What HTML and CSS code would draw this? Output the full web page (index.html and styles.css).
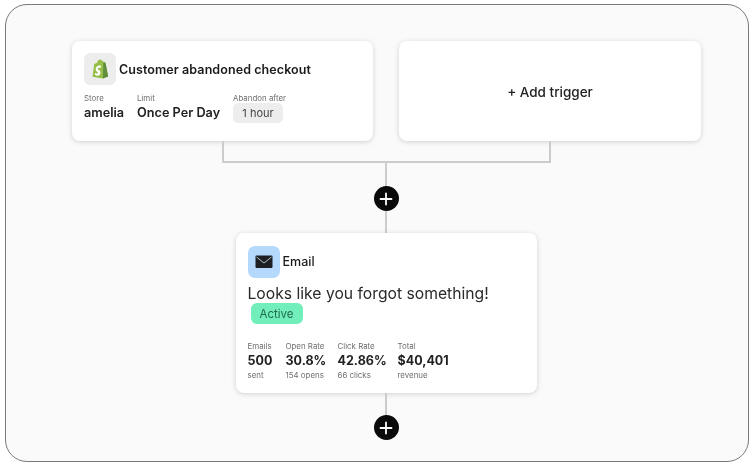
FILE: index.html
```html
<!DOCTYPE html>
<html lang="en">
<head>
<meta charset="utf-8">
<title>Flow</title>
<link rel="stylesheet" href="styles.css">
</head>
<body>
<main class="frame">
  <div class="triggers">
    <section class="card trigger">
      <div class="head">
        <span class="tile tile-grey">
          <svg width="17" height="20" viewBox="0 0 20 23"><path d="M2.6 5.4 5.8 4.4C6.4 2 7.8.4 9.6.4c.9 0 1.400.5 1.700 1 .8 0 1.300.6 1.700 1.700l1.300-.3 1 1.100L16 4.800 19 20.300 12.700 22.700.6 20.500Z" fill="#95bf47"/><path d="M14.600 3.900 16 4.800 19 20.300 12.700 22.700 13.400 3.900Z" fill="#5e8e3e"/><path d="M10.800 8.100 10.100 10.300C9.500 10 8.800 9.900 8.200 9.900c-1.500 0-1.500.9-1.500 1.200 0 1.200 3.300 1.700 3.300 4.600 0 2.300-1.400 3.700-3.400 3.700-2.300 0-3.400-1.400-3.400-1.400l.6-2s1.200 1 2.200 1c.7 0 1-.5 1-.9 0-1.600-2.700-1.700-2.700-4.400 0-2.200 1.600-4.400 4.800-4.400 1.300 0 1.700.4 1.700.4Z" fill="#fff"/></svg>
        </span>
        <h2 class="trigger-title">Customer abandoned checkout</h2>
      </div>
      <div class="fields">
        <div class="field field-store">
          <span class="label">Store</span>
          <strong class="value">amelia</strong>
        </div>
        <div class="field field-limit">
          <span class="label">Limit</span>
          <strong class="value">Once Per Day</strong>
        </div>
        <div class="field">
          <span class="label">Abandon after</span>
          <span class="chip">1 hour</span>
        </div>
      </div>
    </section>
    <section class="card add">+ Add trigger</section>
  </div>
  <div class="bracket"></div>
  <div class="line line-a"></div>
  <div class="plus"><svg width="14" height="14" viewBox="0 0 14 14"><path d="M7 1.500v11M1.500 7h11" stroke="#fff" stroke-width="1.800" stroke-linecap="round"/></svg></div>
  <div class="line line-b"></div>
  <section class="card email">
    <div class="head">
      <span class="tile tile-blue">
        <svg width="18" height="14" viewBox="0 0 18 14"><rect x="0.500" y="0.500" width="17" height="12.500" rx="1" fill="#1d1f24"/><path d="M1.500 2 9 8l7.500-6" fill="none" stroke="#aebccb" stroke-width="1"/></svg>
      </span>
      <h2 class="email-title">Email</h2>
    </div>
    <p class="subject">Looks like you forgot something!</p>
    <span class="status">Active</span>
    <div class="stats">
      <div class="stat stat-emails"><span class="label">Emails</span><strong class="num">500</strong><span class="note">sent</span></div>
      <div class="stat stat-open"><span class="label">Open Rate</span><strong class="num">30.8%</strong><span class="note">154 opens</span></div>
      <div class="stat stat-click"><span class="label">Click Rate</span><strong class="num">42.86%</strong><span class="note">66 clicks</span></div>
      <div class="stat"><span class="label">Total</span><strong class="num">$40,401</strong><span class="note">revenue</span></div>
    </div>
  </section>
  <div class="line line-c"></div>
  <div class="plus"><svg width="14" height="14" viewBox="0 0 14 14"><path d="M7 1.500v11M1.500 7h11" stroke="#fff" stroke-width="1.800" stroke-linecap="round"/></svg></div>
</main>
</body>
</html>
```
FILE: styles.css
```css
* { box-sizing: border-box; }
html, body { margin: 0; height: 100%; background: #fff; }
body { padding: 4px 5px; font-family: Inter, "Liberation Sans", sans-serif; color: #1a1a1a; overflow: hidden; }
.frame {
  width: 744px; height: 458px; border: 1px solid #77797c; border-radius: 22px;
  background: #fafafa; display: flex; flex-direction: column; align-items: center;
  padding: 36px 0 0 18px; overflow: hidden; filter: blur(.3px);
}
.triggers { display: flex; gap: 26px; margin-left: 1px; }
.card { background: #fff; border-radius: 8px; box-shadow: 0 1px 5px rgba(70, 80, 100, .24); }
.trigger { width: 301px; height: 100px; padding: 12px; }
.add { width: 302px; height: 100px; padding-top: 2px; display: flex; align-items: center; justify-content: center; font-size: 13.500px; font-weight: 500; color: #222; }
.head { display: flex; align-items: center; gap: 3px; }
.tile { width: 32px; height: 32px; border-radius: 6px; display: flex; align-items: center; justify-content: center; flex: none; }
.tile-grey { background: #ededed; }
.tile-blue { background: #b5d8fd; border-radius: 7px; }
h2 { margin: 0; font-weight: 600; color: #1a1a1a; }
.trigger-title { font-size: 12.500px; letter-spacing: .08px; }
.email-title { font-size: 12.500px; font-weight: 500; padding-bottom: 2px; }
.fields { display: flex; margin-top: 8px; }
.field { display: flex; flex-direction: column; }
.field-store { width: 53px; }
.field-limit { width: 96px; }
.label { font-size: 7.900px; line-height: 10px; color: #6f6f6f; }
.value { font-size: 12.700px; line-height: 20px; font-weight: 600; color: #222; }
.chip { width: 50px; height: 20px; border-radius: 5px; background: #ededed; display: flex; align-items: center; justify-content: center; font-size: 11px; color: #444; }
.bracket { width: 329px; height: 22px; border: solid #cccccc; border-width: 0 2px 2px 2px; flex: none; }
.line { width: 2px; background: #cccccc; flex: none; }
.line-a { height: 23px; }
.line-b { height: 22px; }
.line-c { height: 22px; }
.plus { width: 25px; height: 25px; border-radius: 50%; background: #0a0a0a; display: flex; align-items: center; justify-content: center; flex: none; }
.email { width: 301px; height: 160px; padding: 13px 12px 0; flex: none; }
.subject { margin: 5px 0 0; font-size: 15.700px; line-height: 22px; color: #2a2a2a; }
.status { display: flex; align-items: center; justify-content: center; width: 52px; height: 21px; margin: -2px 0 0 3px; border-radius: 6px; background: #72eebb; font-size: 11.500px; color: #1f6b4e; }
.stats { display: flex; margin-top: 17px; }
.stat { display: flex; flex-direction: column; }
.stat-emails { width: 38px; }
.stat-open { width: 52px; }
.stat-click { width: 60px; }
.num { font-size: 12.500px; line-height: 19px; font-weight: 700; color: #222; }
.note { font-size: 7.900px; line-height: 11px; color: #6f6f6f; }
```
